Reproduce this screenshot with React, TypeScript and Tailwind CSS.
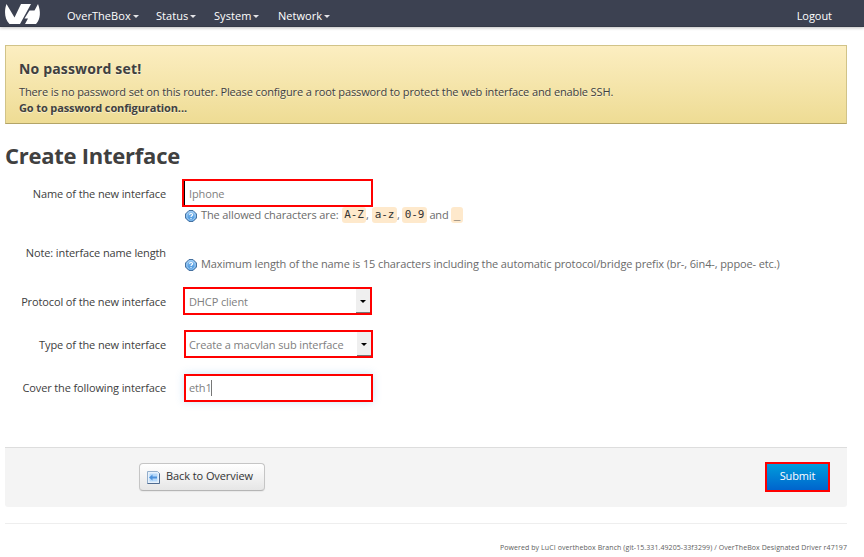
import type { ReactNode } from 'react';

const menus = [
  { name: 'OverTheBox', box: 'w-[89px]' },
  { name: 'Status', box: 'w-[58px]' },
  { name: 'System', box: 'w-[64px]' },
  { name: 'Network', box: 'w-[60px]' },
];

function Logo() {
  return (
    <svg width="36" height="21" viewBox="0 0 36 21" className="block" fill="white">
      <path d="M1.5 0 L9.5 13.5 L16 0 H26 L15 20 H4.5 C-.5 15 -1 7 1.5 0Z" />
      <path d="M33 0 C35.8 7 35.8 15 31 20 H20 L23 14.5 H19.5 L24.5 6.5 H29.5Z" />
    </svg>
  );
}

function Help() {
  return (
    <svg width="12" height="12" viewBox="0 0 12 12" className="mr-[4px] mt-px shrink-0">
      <defs>
        <linearGradient id="help" x1="0" y1="0" x2="0" y2="1">
          <stop stopColor="#8cc2f2" />
          <stop offset="1" stopColor="#3f8fda" />
        </linearGradient>
      </defs>
      <path d="M4 .5h4L11.5 4v4L8 11.5H4L.5 8V4Z" fill="url(#help)" stroke="#47719f" />
      <circle cx="6" cy="6" r="4.2" fill="none" stroke="#b9dcf8" strokeWidth=".8" />
      <path d="M4.5 4.8C4.5 3 7.6 3 7.6 4.8 7.6 5.8 6 5.8 6 7M6 8v1" stroke="white" fill="none" strokeWidth="1.1" />
    </svg>
  );
}

function Code({ children, className }: { children: string; className: string }) {
  return (
    <code className={`flex h-[16px] justify-center rounded-[3px] bg-[#fee9cc] font-['DejaVu_Sans_Mono',monospace] text-[11px] leading-[16px] tracking-[-0.1px] text-[#333] ${className}`}>
      {children}
    </code>
  );
}

function Row({ label, className, leading = 'leading-[29px]', children }: { label: string; className: string; leading?: string; children: ReactNode }) {
  return (
    <div className={`flex ${className}`}>
      <div className={`w-[167px] shrink-0 whitespace-nowrap pr-px text-right ${leading}`}>{label}</div>
      {children}
    </div>
  );
}

function Select({ value, className, pad }: { value: string; className: string; pad: string }) {
  return (
    <div className={`flex h-[28px] justify-between border-2 border-[#ff0000] bg-white ${className}`}>
      <span className={`whitespace-nowrap leading-[26px] text-[#808080] ${pad}`}>{value}</span>
      <span className="flex w-[14px] items-center justify-center border-b border-[#777] bg-[#efefef]">
        <svg width="6" height="3" viewBox="0 0 6 3" className="mt-px"><path d="M0 0h6L3 3Z" fill="#000" /></svg>
      </span>
    </div>
  );
}

export default function App() {
  return (
    <div className="h-[557px] w-[864px] overflow-hidden bg-white font-['Open_Sans',sans-serif] text-[11px] leading-[16px] tracking-[-0.12px] text-[#404040]">
      <header className="flex h-[27px] items-start bg-[#3c4151] pl-[5px] text-white shadow-[0_1px_3px_rgba(0,0,0,0.25),inset_0_-1px_0_rgba(0,0,0,0.1)]">
        <div className="w-[62px] pt-[4px]"><Logo /></div>
        <nav className="flex leading-[32px] tracking-[0.05px]">
          {menus.map((m) => (
            <div key={m.name} className={`flex items-center ${m.box}`}>
              <span>{m.name}</span>
              <svg width="6" height="3" viewBox="0 0 6 3" className="ml-[2px] shrink-0 fill-[#e4e4e8]"><path d="M0 0h6L3 3Z" /></svg>
            </div>
          ))}
        </nav>
        <span className="ml-auto mr-[32px] leading-[32px] tracking-[-0.05px]">Logout</span>
      </header>

      <section className="ml-[5px] mt-[18px] h-[79px] w-[842px] border border-[#d1c388] border-b-[#b3a467] bg-linear-to-b from-[#fceec1] to-[#eedc94] px-[13px] pt-[13px] [text-shadow:0_1px_0_rgba(255,255,255,0.5)]">
        <h2 className="text-[14px] font-bold leading-[20px] tracking-[0.16px]">No password set!</h2>
        <p className="mt-[5px] whitespace-nowrap">There is no password set on this router. Please configure a root password to protect the web interface and enable SSH.</p>
        <a className="block font-bold">Go to password configuration...</a>
      </section>

      <h1 className="ml-[5px] mt-[15px] h-[33px] text-[22px] font-bold leading-[32px] tracking-[-0.25px]">Create Interface</h1>

      <main>
        <Row label="Name of the new interface" className="mt-[7px] h-[60px]">
          <div className="ml-[15px]">
            <div className="h-[28px] w-[191px] border-2 border-[#ff0000] bg-white">
              <div className="h-[24px] border-l border-black pl-[4px] leading-[26px] text-[#808080]">Iphone</div>
            </div>
            <div className="ml-[3px] flex h-[16px] items-center whitespace-nowrap text-[#6b6b6b]">
              <Help />
              <span className="w-[141px]">The allowed characters are:</span>
              <Code className="w-[24px]">A-Z</Code><span className="w-[6px]">,</span>
              <Code className="w-[25px]">a-z</Code><span className="w-[5px]">,</span>
              <Code className="w-[25px]">0-9</Code><span className="w-[24px] text-center">and</span>
              <Code className="w-[12px]">_</Code>
            </div>
          </div>
        </Row>
        <Row label="Note: interface name length" className="h-[48px]" leading="leading-[28px]">
          <div className="ml-[18px] mt-[17px] flex h-[16px] items-center whitespace-nowrap text-[#6b6b6b]">
            <Help />Maximum length of the name is 15 characters including the automatic protocol/bridge prefix (br-, 6in4-, pppoe- etc.)
          </div>
        </Row>
        <Row label="Protocol of the new interface" className="h-[43px]">
          <Select value="DHCP client" className="ml-[16px] w-[189px]" pad="pl-[4px]" />
        </Row>
        <Row label="Type of the new interface" className="h-[44px]">
          <Select value="Create a macvlan sub interface" className="ml-[17px] w-[189px]" pad="pl-[3px]" />
        </Row>
        <Row label="Cover the following interface" className="h-[73px]" leading="leading-[28px]">
          <div className="ml-[17px] flex h-[28px] w-[189px] items-center border-2 border-[#ff0000] bg-white pl-[3px] text-[#808080] shadow-[0_0_8px_rgba(82,168,236,0.3)]">
            <span className="w-[22px]">eth1</span><span className="h-[16px] w-px bg-[#777]" />
          </div>
        </Row>
      </main>

      <div className="ml-[5px] flex h-[60px] w-[842px] items-start rounded-b-[3px] border-t border-[#ddd] bg-[#f4f4f4] pl-[134px] pr-[17px] pt-[14px]">
        <button className="mt-[1px] flex h-[28px] w-[126px] items-center rounded-[4px] border border-[#c5c5c5] border-b-[#b5b5b5] bg-linear-to-b from-white to-[#e6e6e6] pl-[7px] text-[#333] shadow-[0_1px_1px_rgba(0,0,0,0.05)]">
          <svg width="13" height="13" viewBox="0 0 13 13" className="mr-[6px] shrink-0">
            <path d="M.5.5h10l2 2v10H.5Z" fill="#e6f1fc" stroke="#93aecb" />
            <path d="M12.5 2.5v10H.5" fill="none" stroke="#4f6b90" />
            <path d="M2.5 2.5h8v8h-8Z" fill="#b5d8fa" />
            <path d="M2 6.5 5.5 3.5v2H10v2H5.5v2Z" fill="#4c91db" />
          </svg>
          <span className="mb-[2px] whitespace-nowrap tracking-[-0.08px]">Back to Overview</span>
        </button>
        <button className="ml-auto h-[30px] w-[65px] border-2 border-[#ff0000] bg-linear-to-b from-[#049cdb] to-[#0064cd] pb-[2px] text-white">Submit</button>
      </div>

      <footer className="ml-[5px] mt-[16px] w-[842px] border-t border-[#eee] pt-[16px] text-right text-[7px] tracking-[0.083px] text-[#606060]">
        <span className="whitespace-nowrap">Powered by LuCI overthebox Branch (git-15.331.49205-33f3299) / OverTheBox Designated Driver r47197</span>
      </footer>
    </div>
  );
}
